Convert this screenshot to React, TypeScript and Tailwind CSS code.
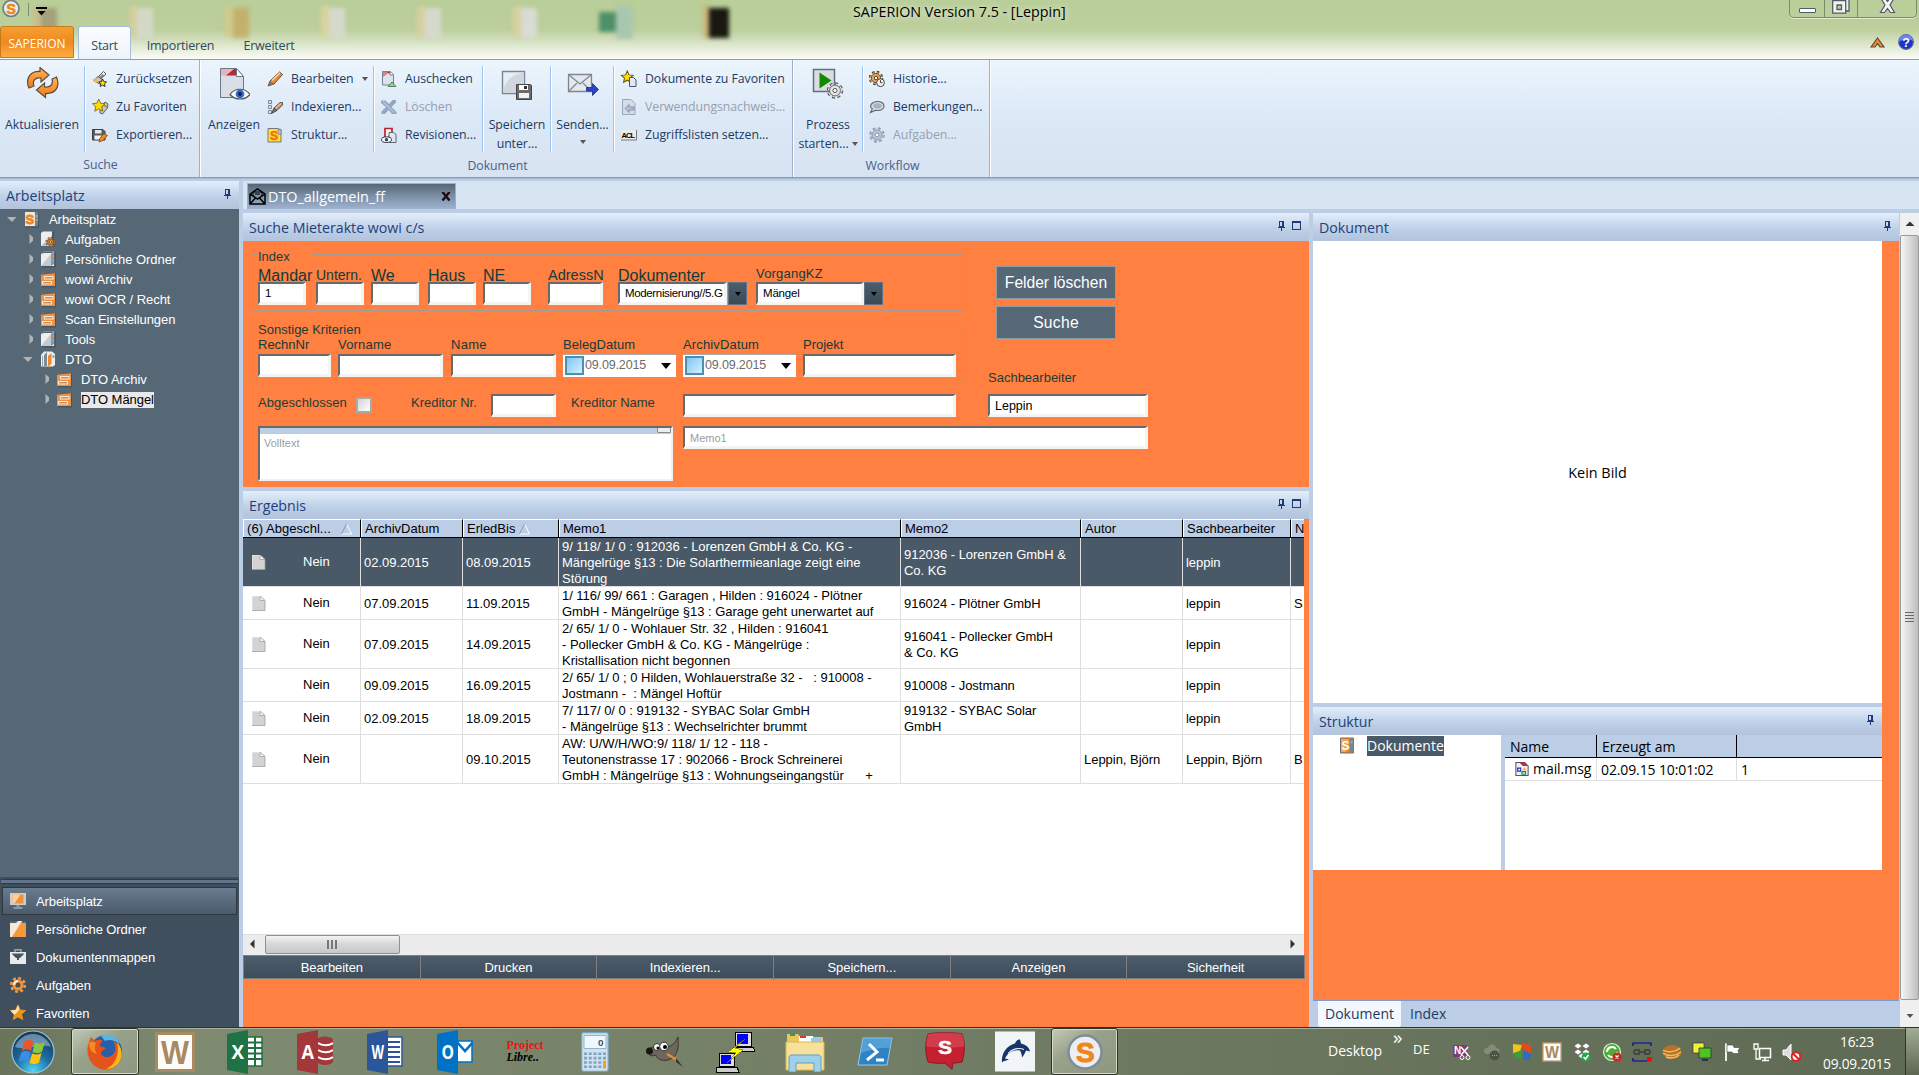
import React from "react";

type Kids = { children?: React.ReactNode };

/* ---------- shared glyphs ---------- */

const Pin = () => (
  <svg width="9" height="10" viewBox="0 0 9 10" className="shrink-0" fill="none" stroke="#1f3a7a" shapeRendering="crispEdges">
    <path d="M2.5 0.5h3v5h-3z M6.5 0v6 M1 6.5h7 M4.5 7v3" />
  </svg>
);
const MaxBox = () => (
  <svg width="10" height="10" viewBox="0 0 10 10" className="shrink-0" fill="none" stroke="#1f3a7a" shapeRendering="crispEdges">
    <path d="M0.5 1.5h8v7h-8z M0 0.5h9" />
  </svg>
);
const Down = ({ c = "#555" }: { c?: string }) => (
  <svg width="6" height="4" viewBox="0 0 6 4" className="shrink-0">
    <path d="M0 0h6L3 4z" fill={c} />
  </svg>
);

function S16({ children, size = 16 }: Kids & { size?: number }) {
  return (
    <svg width={size} height={size} viewBox="0 0 16 16" className="shrink-0 overflow-visible">
      {children}
    </svg>
  );
}

const star = "M8 0l2.200 5 5.300.6-4 3.600 1.200 5.300L8 11.800l-4.700 2.700 1.200-5.300-4-3.600L5.800 5z";

const Gear = ({ fill, stroke, cx = 8, cy = 8, r = 5 }: { fill: string; stroke: string; cx?: number; cy?: number; r?: number }) => (
  <g>
    <circle cx={cx} cy={cy} r={r + 1.2} fill="none" stroke={stroke} strokeWidth={r * 0.6} strokeDasharray={`${(r + 1.2) * 0.42} ${(r + 1.2) * 0.3654}`} />
    <circle cx={cx} cy={cy} r={r + 0.7} fill="none" stroke={fill} strokeWidth={r * 0.35} strokeDasharray={`${(r + 0.7) * 0.34} ${(r + 0.7) * 0.4454}`} />
    <circle cx={cx} cy={cy} r={r} fill={fill} stroke={stroke} strokeWidth=".8" />
    <circle cx={cx} cy={cy} r={r * 0.38} fill="#fff" stroke={stroke} strokeWidth="1" />
  </g>
);

/* ---------- ribbon icons ---------- */

const IcReset = () => (
  <S16>
    <path d="M11.500.500l2.500 2.500-4.500 4.500-3-2z" fill="#f4f4f4" stroke="#555" />
    <path d="M10.500 3l2 1.500-3 3-2.500-1.500z" fill="#8b8b8b" />
    <path d="M6 5.500l4 3-2.500 4.500-6-3.500z" fill="#c9c9c9" stroke="#555" strokeWidth=".9" />
    <path d="M0 8.500l6-1.500-1.500 5z" fill="#ffb84a" />
    <g transform="translate(6.500 8) scale(.52)"><path d={star} fill="#ffe100" stroke="#333" strokeWidth="1.900" /></g>
  </S16>
);
const IcFav = () => (
  <S16>
    <path d="M8 11l5-8 3 2-.5 4-5 6-2.500-1z" fill="#c4c4c4" stroke="#555" strokeWidth=".9" />
    <path d="M11.500 6l3.500 2" stroke="#666" />
    <g transform="scale(.84)"><path d={star} fill="#ffdd00" stroke="#8a6a10" strokeWidth="1.100" /></g>
  </S16>
);
const IcExport = () => (
  <S16>
    <path d="M.5 2.500h10.500l2 2v8.500H.5z" fill="#555b63" stroke="#3a3f46" />
    <path d="M3 3h6.500v3.500H3z" fill="#e6e6e6" />
    <path d="M2.500 8.500h8v4h-8z" fill="#f7f7f7" />
    <path d="M7 15l1-4 4-4.500 3.500 2-4.500 5z" fill="#f08a24" stroke="#6b3a0a" strokeWidth=".7" />
  </S16>
);
const IcPencil = () => (
  <S16>
    <path d="M1 15l2-5L12.500 1l3 2.500-8.500 9.500z" fill="#ee8a2c" stroke="#5a4030" strokeWidth=".9" />
    <path d="M1 15l2-5 4 3z" fill="#777" />
    <path d="M5 9.500l8-7.800" stroke="#ffd9a8" strokeWidth="1.300" />
  </S16>
);
const IcIndex = () => (
  <S16>
    <path d="M1.500 1.500h3v3h-3z M1.500 6.500h3v3h-3z M1.500 11.500h3v3h-3z" fill="#dfe6ef" stroke="#7a8796" />
    <path d="M4.500 14.500l2.500-5.500 3 2.500z" fill="#777" stroke="#333" strokeWidth=".8" />
    <path d="M7 9l6-5.500h2.500v2.500L10 11.500z" fill="#b98a60" stroke="#444" strokeWidth=".8" />
    <path d="M8.500 9.500l5.500-5" stroke="#f3c9a0" strokeWidth="1.100" />
  </S16>
);
const IcStruct = () => (
  <S16>
    <path d="M1 1.500h9l4 1v12.500H1z" fill="#ffe03d" stroke="#777" />
    <path d="M11 2.500h3v5h-3z" fill="#b7bcc4" stroke="#777" strokeWidth=".6" />
    <text x="3" y="13" fontSize="12" fontWeight="900" fontFamily="Liberation Sans" fill="#f07800" stroke="#f07800" strokeWidth=".6">S</text>
  </S16>
);
const IcCheckout = () => (
  <S16>
    <path d="M1.500.5h8l3 3v10.500h-11z" fill="#dde2ea" stroke="#76828f" />
    <path d="M2 1h7L2 6z" fill="#c9898d" />
    <path d="M5.500 1h4v2z" fill="#b5242c" />
    <path d="M9 .5v3.500h3.500" fill="#fff" stroke="#76828f" />
    <path d="M7 15.500l4-4.500 4 4.500z" fill="#8fd49a" stroke="#3d6f4a" strokeWidth=".8" />
  </S16>
);
const IcDelete = () => (
  <S16>
    <path d="M0 1.500h4.500L8 5l3.500-4H15v2.500L10.500 8l5 5v2H11l-3.500-4L4 15H.5v-2.500L5 8 0 4z" fill="#93a5c0" />
    <path d="M2 2.500l11 11" stroke="#b9c6d9" strokeWidth="1.200" />
  </S16>
);
const IcRev = () => (
  <S16>
    <path d="M4 10V1.500h7v4" fill="#f4f5f7" stroke="#b9232c" strokeWidth="1.700" />
    <path d="M8 5.500h4.500l2.500 2v8H8z" fill="#dfe5ed" stroke="#5c6775" />
    <ellipse cx="5.500" cy="12.700" rx="5" ry="2.800" fill="#fff" stroke="#333" />
    <circle cx="5.500" cy="12.700" r="1.800" fill="#334a8a" />
  </S16>
);
const IcDocFav = () => (
  <S16>
    <g transform="scale(.78)"><path d={star} fill="#ffdd00" stroke="#6a5510" strokeWidth="1.300" /></g>
    <path d="M8.500 6.500h4l2.500 2.500v6.500H8.500z" fill="#dfe9f8" stroke="#44546c" />
  </S16>
);
const IcUsage = () => (
  <S16>
    <path d="M1.500.5h8.500l4 4v11h-12.500z" fill="#d4dce8" stroke="#9aa7ba" />
    <path d="M4 9.500l4-4v2.500h5v3H8v2.500z" fill="#b5c2d6" stroke="#7a8ba6" strokeWidth=".9" />
  </S16>
);
const IcAcl = () => (
  <S16>
    <path d="M0 3h15.500v10H0z" fill="#ececec" />
    <path d="M0 13h15.500V3" stroke="#777" fill="none" />
    <text x=".5" y="10.800" fontSize="7.500" fontWeight="900" fontFamily="Liberation Sans" fill="#000" textLength="13.500">ACL</text>
  </S16>
);
const IcHist = () => (
  <S16>
    <Gear fill="#f0a050" stroke="#444" cx={7} cy={7} r={4.6} />
    <circle cx="11.500" cy="11.700" r="3.900" fill="#f4f4f4" stroke="#444" />
    <path d="M11.500 9.200v2.500h2" fill="none" stroke="#444" />
  </S16>
);
const IcComment = () => (
  <S16>
    <path d="M8.500 2.500c4 0 6.500 2 6.500 4.500s-2.500 4.500-6.500 4.500l-2-.2L1.500 13.500l1.800-3.500C-.5 7 3 2.500 8.500 2.500z" fill="#d3d8df" stroke="#5b6573" strokeWidth="1.100" />
    <ellipse cx="8.500" cy="6.800" rx="4.200" ry="2.600" fill="#a9b2be" />
  </S16>
);
const IcTask = () => <S16><Gear fill="#b9c4d4" stroke="#8595ad" r={5} /></S16>;

const BigRefresh = () => (
  <svg width="32" height="32" viewBox="0 0 32 32" className="ml-[2px]">
    <defs>
      <linearGradient id="rf" x1="0" y1="0" x2="0" y2="1"><stop offset="0" stopColor="#ffb35c" /><stop offset="1" stopColor="#f07c12" /></linearGradient>
    </defs>
    <path d="M2 21C-2 12 3 4 13 4.500V.5l9 7.500-8 7v-4C8 10 5 14 7 19z" fill="url(#rf)" stroke="#5e4b3b" strokeWidth="1.200" />
    <path d="M29.500 10c4 10-1 17-11 16.500v4L9.500 23l8-7v4c6 1 9-3 7.500-8z" fill="url(#rf)" stroke="#5e4b3b" strokeWidth="1.200" />
  </svg>
);
const BigView = () => (
  <svg width="32" height="34" viewBox="0 0 32 34">
    <path d="M2.500 1.500h16l7 8v21h-23z" fill="#d8dde6" stroke="#6d7785" />
    <path d="M3 2h15.500l-7 6.500H3z" fill="#e5b5b9" />
    <path d="M8 8.500l8-6.500h2.500v6.500z" fill="#b52a32" />
    <path d="M18.500 1.500l7 8h-7z" fill="#fff" stroke="#6d7785" />
    <path d="M12 27.500c5-7 15-7 20 0-5 6-15 6-20 0z" fill="#fff" stroke="#555" strokeWidth="1.200" />
    <circle cx="22" cy="27" r="4.400" fill="#3568c8" />
    <circle cx="22" cy="27" r="1.900" fill="#0b1f55" />
  </svg>
);
const BigSave = () => (
  <svg width="32" height="34" viewBox="0 -2 32 34">
    <path d="M1.500 2.500h22v22h-22z" fill="#e9edf2" stroke="#76879a" strokeWidth="1.400" />
    <path d="M2.500 20C6 9 14 5 22.500 4v19.500h-20z" fill="#d2d7de" />
    <path d="M15.500 15.500h14l1 1v14h-15z" fill="#6b6b6b" stroke="#444" />
    <path d="M18 16h9v5h-9z" fill="#fff" /><path d="M23 17h3v3h-3z" fill="#333" />
    <path d="M18 24h10v5H18z" fill="#f1f1f1" />
  </svg>
);
const BigSend = () => (
  <svg width="32" height="32" viewBox="0 0 32 32">
    <path d="M1.500 7.500h23v17h-23z" fill="#e5e8ec" stroke="#7b8794" strokeWidth="1.300" />
    <path d="M2 8l11 9L24 8 M2 24l8-8 M24 24l-8-8" fill="none" stroke="#7b8794" strokeWidth="1.200" />
    <path d="M19.500 20.500h6v-4l6 6-6 6v-4.500h-6z" fill="#2a45d0" stroke="#1a2a80" strokeWidth=".8" />
  </svg>
);
const BigProcess = () => (
  <svg width="32" height="32" viewBox="0 0 32 32">
    <path d="M1.500 2.500h21v22h-21z" fill="#d9dde2" stroke="#5d7085" strokeWidth="1.500" />
    <path d="M7.500 5.500l12 8-12 8z" fill="#128a00" />
    <Gear fill="#e4e4e4" stroke="#555" cx={23} cy={23.5} r={5.4} />
  </svg>
);

/* ---------- ribbon ---------- */

const Sep = () => <div className="mt-[6px] h-[86px] w-[2px] shrink-0 border-r border-white bg-[#9cc4f5]" />;
const GroupSep = () => <div className="h-[117px] w-[2px] shrink-0 border-r border-white bg-[#9fb0c8]" />;

function Item({ icon, label, off, arrow }: { icon: React.ReactNode; label: string; off?: boolean; arrow?: boolean }) {
  return (
    <div className={"flex h-7 items-center gap-2 whitespace-nowrap " + (off ? "text-[#97a0ad]" : "text-[#1e3a63]")}>
      {icon}
      <span>{label}</span>
      {arrow && <Down />}
    </div>
  );
}
function Big({ icon, lines, w, arrow }: { icon: React.ReactNode; lines: string[]; w: string; arrow?: "inline" | "below" }) {
  return (
    <div className={"flex shrink-0 flex-col items-center pt-[7px] text-center leading-[19px] whitespace-nowrap text-[#1e3a63] " + w}>
      <div className="h-[48px]">{icon}</div>
      {lines.map((l, i) => (
        <div key={l} className="flex items-center gap-[3px]">
          {l}
          {arrow === "inline" && i === lines.length - 1 && <Down />}
        </div>
      ))}
      {arrow === "below" && <div className="mt-[6px]"><Down /></div>}
    </div>
  );
}
function Group({ label, w, children }: Kids & { label: string; w: string }) {
  return (
    <div className={"flex shrink-0 flex-col " + w}>
      <div className="flex h-[93px]">{children}</div>
      <div className="pl-[2px] text-center leading-[26px] text-[#48618a]">{label}</div>
    </div>
  );
}

function Ribbon() {
  return (
    <div className="flex h-[121px] shrink-0 flex-col border-t border-[#8b9db8] bg-[#bccde6]">
      <div className="flex h-[118px] shrink-0 border-b border-[#8b9db8] bg-linear-to-b from-[#ecf5fd] via-[#dbe8f6] via-50% to-[#d8e3f2] text-[12.3px] tracking-[-0.05px]">
        <Group label="Suche" w="w-[199px]">
          <Big icon={<BigRefresh />} lines={["Aktualisieren"]} w="w-[84px]" />
          <Sep />
          <div className="pt-[5px] pl-[6px]">
            <Item icon={<IcReset />} label="Zurücksetzen" />
            <Item icon={<IcFav />} label="Zu Favoriten" />
            <Item icon={<IcExport />} label="Exportieren..." />
          </div>
        </Group>
        <GroupSep />
        <Group label="Dokument" w="w-[591px]">
          <Big icon={<BigView />} lines={["Anzeigen"]} w="w-[66px]" />
          <div className="w-[106px] pt-[5px] whitespace-nowrap">
            <Item icon={<IcPencil />} label="Bearbeiten" arrow />
            <Item icon={<IcIndex />} label="Indexieren..." />
            <Item icon={<IcStruct />} label="Struktur..." />
          </div>
          <Sep />
          <div className="w-[107px] pt-[5px] pl-[6px]">
            <Item icon={<IcCheckout />} label="Auschecken" />
            <Item icon={<IcDelete />} label="Löschen" off />
            <Item icon={<IcRev />} label="Revisionen..." />
          </div>
          <Sep />
          <Big icon={<BigSave />} lines={["Speichern", "unter..."]} w="w-[66px]" />
          <Sep />
          <Big icon={<BigSend />} lines={["Senden..."]} w="w-[61px]" arrow="below" />
          <Sep />
          <div className="pt-[5px] pl-[6px]">
            <Item icon={<IcDocFav />} label="Dokumente zu Favoriten" />
            <Item icon={<IcUsage />} label="Verwendungsnachweis..." off />
            <Item icon={<IcAcl />} label="Zugriffslisten setzen..." />
          </div>
        </Group>
        <GroupSep />
        <Group label="Workflow" w="w-[195px]">
          <Big icon={<BigProcess />} lines={["Prozess", "starten..."]} w="w-[68px]" arrow="inline" />
          <Sep />
          <div className="pt-[5px] pl-[5px] tracking-[-0.080px]">
            <Item icon={<IcHist />} label="Historie..." />
            <Item icon={<IcComment />} label="Bemerkungen..." />
            <Item icon={<IcTask />} label="Aufgaben..." off />
          </div>
        </Group>
        <GroupSep />
      </div>
      <div className="h-px bg-[#a5b8d3]" />
    </div>
  );
}

/* ---------- title bar ---------- */

const ghosts = [
  { back: "bg-[#c9b98a]", front: "bg-[#a39a78]" },
  { back: "bg-[#d9cf9b]", front: "bg-[#d6d9cc]" },
  { back: "bg-[#d6c98a]", front: "bg-[#c4ad66]" },
  { back: "bg-[#e0d39f]", front: "bg-[#d8dad2]" },
  { back: "bg-[#e0cfa0]", front: "bg-[#d8dad2]" },
  { back: "bg-[#e0cfa0]", front: "bg-[#dcddda]" },
];

function TitleBar() {
  return (
    <div className="relative flex h-[59px] shrink-0 flex-col bg-linear-to-b from-[#b9ce98] via-[#bccf9c] via-50% to-[#fbfcf8]">
      <div className="absolute top-[5px] left-[33px] flex gap-[72px] blur-[2px]">
        {ghosts.map((g, i) => (
          <div key={i} className="flex h-[33px] w-[24px]">
            <div className={"my-px w-[8px] opacity-80 " + g.back} />
            <div className={"mt-[3px] grow opacity-90 " + g.front} />
          </div>
        ))}
        <div className="-ml-[10px] flex h-[34px] w-[34px] items-center">
          <div className="h-[20px] w-[17px] bg-[#4d9068]" />
          <div className="h-[33px] w-[17px] bg-[#a9c7b0]" />
        </div>
        <div className="ml-[-2px] flex h-[33px] w-[26px]">
          <div className="w-[6px] bg-[#cbb578]" />
          <div className="mt-[3px] grow bg-[#181810]" />
        </div>
      </div>
      <div className="relative flex h-[27px]">
        <svg width="20" height="18" viewBox="0 0 20 18" className="ml-[1px]">
          <circle cx="10" cy="8.500" r="8" fill="#e9e9e6" stroke="#6f7d84" strokeWidth="1.700" />
          <text x="5.500" y="13.500" fontSize="14" fontWeight="900" fontFamily="Liberation Sans" fill="#f08418" stroke="#f08418" strokeWidth=".6">S</text>
        </svg>
        <div className="mt-[3px] ml-[7px] h-[13px] w-px bg-[#7c8a6e]" />
        <svg width="11" height="10" viewBox="0 0 11 10" className="mt-[6px] ml-[7px]"><path d="M0 1h11v2H0z M1.500 5h8L5.500 9.500z" /></svg>
        <div className="ml-[806px] w-[218px] pt-[1px] text-[14.300px] leading-[22px] whitespace-nowrap text-black [text-shadow:0_0_6px_white]">
          SAPERION Version 7.5 - [Leppin]
        </div>
        <div className="ml-[718px] flex h-[18px] w-[128px] rounded-b-[5px] border border-t-0 border-[#7d8a6c] shadow-[0_1px_0_#e4edd4]">
          <div className="flex w-[35px] items-center justify-center border-r border-[#7d8a6c] pt-[3px]">
            <div className="h-[5px] w-[17px] rounded-[1px] border border-[#555a66] bg-white" />
          </div>
          <div className="flex w-[33px] justify-center border-r border-[#7d8a6c]">
            <svg width="18" height="15" viewBox="0 0 18 15"><path d="M4 0v-2h13v13h-3" fill="#eee" stroke="#555a66" strokeWidth="1.300" /><path d="M.7.7h13v12.500H.7z M5 5v4.500h4.500V5z" fill="#f3f3f3" fillRule="evenodd" stroke="#555a66" strokeWidth="1.300" /></svg>
          </div>
          <div className="flex grow justify-center">
            <svg width="17" height="14" viewBox="0 0 17 14"><path d="M1.500-2.500h4l3 4 3-4h4L11 5l4.500 7.500h-4l-3-4-3 4h-4L6 5z" fill="#f3f3f3" stroke="#555a66" strokeWidth="1.200" /></svg>
          </div>
        </div>
      </div>
      <div className="relative flex h-[33px] text-[12.500px] text-[#2e4a5c]">
        <div className="h-[32px] w-[74px] rounded-t-[3px] border border-[#c87a1a] bg-linear-to-b from-[#f3a032] via-[#f0891f] via-50% to-[#ffab3d] text-center text-[12px] leading-[33px] text-white">SAPERION</div>
        <div className="ml-[4px] h-[33px] w-[53px] rounded-t-[3px] border border-b-0 border-[#a9bdd8] bg-linear-to-b from-[#fbfdff] to-[#edf4fc] text-center leading-[37px] tracking-tight">Start</div>
        <div className="ml-[15px] w-[69px] text-center leading-[39px] tracking-[-0.2px]">Importieren</div>
        <div className="ml-[27px] w-[54px] text-center leading-[39px] tracking-[-0.2px]">Erweitert</div>
        <div className="grow" />
        <svg width="15" height="12" viewBox="0 0 15 12" className="mt-[10px]"><path d="M1 11l6.500-9L14 11h-4L7.500 7.500 5 11z" fill="#f08a24" stroke="#5b4d3e" strokeWidth="1.200" /></svg>
        <svg width="16" height="16" viewBox="0 0 16 16" className="mt-[8px] mr-[5px] ml-[13px]">
          <circle cx="8" cy="8" r="7.300" fill="#1c35c8" stroke="#5a6390" strokeWidth="1.200" />
          <path d="M1 8a7 7 0 0 1 14-1C11 5 5 5 1 8z" fill="#6f86e6" />
          <text x="4.300" y="12.500" fontSize="12.500" fontWeight="900" fontFamily="Liberation Sans" fill="#fff">?</text>
        </svg>
      </div>
    </div>
  );
}

/* ---------- panels ---------- */

function PanelHead({ title, max }: { title: string; max?: boolean }) {
  return (
    <div className="flex h-7 shrink-0 items-center bg-linear-to-b from-[#e3eefb] via-[#bccfe6] via-60% to-[#b2c3db] pr-[7px] pl-[6px] text-[14.200px] text-[#1f3f7d]">
      <span className="grow pt-[2px]">{title}</span>
      <div className="flex gap-[6px] pb-[2px]">
        <Pin />
        {max && <MaxBox />}
      </div>
    </div>
  );
}

/* ---------- sidebar ---------- */

const TreeS = () => (
  <S16>
    <path d="M2 16h12V2h1v15H2z" fill="#2c3740" opacity=".35" />
    <path d="M1 1h10v14H1z" fill="#f0e6da" /><path d="M11 2l3-1v13l-3 1.500z" fill="#76818a" />
    <text x="1.500" y="13" fontSize="13" fontWeight="900" fontFamily="Liberation Sans" fill="#f0831e" stroke="#f0831e" strokeWidth=".8">S</text>
    <path d="M11.500 4h2.500v2.500h-2.500z" fill="#59b8e8" /><path d="M11.500 8h2.500v2h-2.500z" fill="#f08a24" />
  </S16>
);
const DocS = () => (
  <S16>
    <path d="M1.500 0h13v15h-13z" fill="#f0861a" stroke="#6a6f75" />
    <path d="M10.500 1h4v14l-4-1z" fill="#7a858e" />
    <path d="M2 1h8l-3 13H2z" fill="#f5a752" />
    <text x="2.500" y="12" fontSize="12" fontWeight="900" fontFamily="Liberation Sans" fill="#fff">S</text>
    <path d="M11.500 3h2v2.500h-2z" fill="#59b8e8" />
  </S16>
);
const TreeBinder = () => (
  <S16>
    <path d="M2 15h13V1h1v15.500H2z" fill="#2c3740" opacity=".35" />
    <path d="M1 3l3-2.500h10v14.500H1z" fill="#eceeef" /><path d="M1 3l3-2.500h10l-2 1.500H4z" fill="#59636c" /><path d="M1 15L11 3v12z" fill="#c3c9cd" /><path d="M11 3l3-2v12l-3 2z" fill="#8a949c" /><path d="M12 4h2v2.500h-2z" fill="#f08a24" /><path d="M12 8h2v2.500h-2z" fill="#59b8e8" />
  </S16>
);
const TreeTask = () => (
  <S16>
    <path d="M1 2l2-1.500h9V15H1z" fill="#eceeef" /><path d="M1 15L12 4v11z" fill="#bcc3c8" /><path d="M12 .5h2V14h-2z" fill="#4b5660" /><Gear fill="#e88a34" stroke="#6b4a2a" cx={10.5} cy={11} r={3} />
  </S16>
);
const TreeArchive = () => (
  <S16>
    <path d="M2 15h13V2h1v14.500H2z" fill="#2c3740" opacity=".35" />
    <path d="M1 4l3-3h11v14H1z" fill="#ee9141" /><path d="M1 4l3-3h11v1.200l-10 1z" fill="#59636c" />
    <path d="M4.500 5.500h8.500v2.500H4.500z M2.500 10.500h9v2.500h-9z" fill="#c98d5e" stroke="#fbe9d8" strokeWidth="1.100" />
  </S16>
);
const TreeDto = () => (
  <S16>
    <path d="M1 4l3-3.500h8l3 2.500v11l-2 1.500H1z" fill="#eceeef" /><path d="M4 4l3-3v14H4z" fill="#7f8a93" /><path d="M8 5l3.500-3v11l-3.500 2.500z" fill="#ee8a2c" /><path d="M12.500 4h2v3h-2z" fill="#59b8e8" /><path d="M2 5h1v10H2z" fill="#9ba4ab" />
  </S16>
);

const tree: { label: string; pad: string; open?: boolean; icon: () => React.ReactElement; sel?: boolean }[] = [
  { label: "Arbeitsplatz", pad: "pl-[6px]", open: true, icon: TreeS },
  { label: "Aufgaben", pad: "pl-[22px]", icon: TreeTask },
  { label: "Persönliche Ordner", pad: "pl-[22px]", icon: TreeBinder },
  { label: "wowi Archiv", pad: "pl-[22px]", icon: TreeArchive },
  { label: "wowi OCR / Recht", pad: "pl-[22px]", icon: TreeArchive },
  { label: "Scan Einstellungen", pad: "pl-[22px]", icon: TreeArchive },
  { label: "Tools", pad: "pl-[22px]", icon: TreeBinder },
  { label: "DTO", pad: "pl-[22px]", open: true, icon: TreeDto },
  { label: "DTO Archiv", pad: "pl-[38px]", icon: TreeArchive },
  { label: "DTO Mängel", pad: "pl-[38px]", icon: TreeArchive, sel: true },
];

const nav: { label: string; icon: React.ReactElement }[] = [
  { label: "Arbeitsplatz", icon: <S16><path d="M0 0h16v12H0z" fill="#c9ced3" /><path d="M2.500 1.500h11v9h-11z" fill="#f39034" /><path d="M2.500 1.500h8l-6 9h-2z" fill="#fbcfa2" /><path d="M6.500 12h3v2h3v2h-9v-2h3z" fill="#8e979f" /></S16> },
  { label: "Persönliche Ordner", icon: <S16><path d="M0 0h16v16H0z" fill="#f59a3c" /><path d="M0 0h12L2 16H0z" fill="#f6e7d8" /><path d="M0 0h8l-2 2H0z M12 0h4v2h-4z" fill="#59636c" /></S16> },
  { label: "Dokumentenmappen", icon: <S16><path d="M0 3h16v12H0z" fill="#e8ebee" /><path d="M5 3V.8h6V3" fill="none" stroke="#9aa4ad" strokeWidth="1.500" /><path d="M1.500 4.500h13L10 9H6z" fill="#46525e" /><path d="M7 8h2v3H7z" fill="#46525e" /></S16> },
  { label: "Aufgaben", icon: <S16><circle cx="8" cy="8" r="4" fill="none" stroke="#f39034" strokeWidth="3" /><circle cx="8" cy="8" r="6.800" fill="none" stroke="#f39a48" strokeWidth="2.600" strokeDasharray="2.900 2.440" /><path d="M4 8a4 4 0 0 1 4-4" fill="none" stroke="#fbe3cd" strokeWidth="2.500" /></S16> },
  { label: "Favoriten", icon: <S16><path d={star} fill="#f7930f" stroke="#f7930f" /><path d="M8 0l1.200 5-4.900 5-3.800-4.400L5.800 5z" fill="#fff" opacity=".75" /></S16> },
];

function Sidebar() {
  return (
    <div className="flex w-[239px] shrink-0 flex-col font-['Liberation_Sans',sans-serif] text-white">
      <div className="font-['Open_Sans',sans-serif]"><PanelHead title="Arbeitsplatz" /></div>
      <div className="grow bg-[#566876] text-[13px]">
        {tree.map((t) => (
          <div key={t.label} className={"flex h-5 items-center " + t.pad}>
            <svg width="11" height="12" viewBox="0 0 11 12" className="shrink-0">
              {t.open ? <path d="M1 4h9.500L6 9z" fill="#b3b3b3" /> : <path d="M7.500 1v10l5.500-5z" fill="#b3b3b3" />}
            </svg>
            <div className="ml-[7px] h-4"><t.icon /></div>
            <span className={"mt-px ml-[9px] leading-4 tracking-[-0.05px] whitespace-nowrap " + (t.sel ? "bg-[#e9e9e9] text-black" : "")}>{t.label}</span>
          </div>
        ))}
      </div>
      <div className="h-[150px] shrink-0 bg-[#3f4f5e] text-[13px]">
        <div className="mx-px mt-[2px] h-[5px] border-y border-[#2e3a46] bg-[#61748a]" />
        {nav.map((n, i) => (
          <div key={n.label} className={"mx-[2px] flex h-7 items-center gap-[10px] " + (i === 0 ? "mt-[3px] border border-[#2f3841] bg-linear-to-b from-[#697b8e] to-[#4b5b6c] pl-[7px]" : "pl-[8px]")}>
            {n.icon}
            <span className="pt-px tracking-[-0.100px]">{n.label}</span>
          </div>
        ))}
      </div>
    </div>
  );
}

/* ---------- search form ---------- */

function Field({ w, children, cls = "text-[11.500px]" }: Kids & { w: string; cls?: string }) {
  return (
    <div className={"h-[23px] shrink-0 overflow-hidden border-t-2 border-r-[3px] border-b-[3px] border-l-2 border-t-[#696969] border-r-[#f4f4f4] border-b-[#f4f4f4] border-l-[#696969] bg-white pl-[5px] leading-[18px] whitespace-nowrap text-black " + w + " " + cls}>
      {children}
    </div>
  );
}
function Drop() {
  return <div className="flex h-[23px] w-[19px] shrink-0 items-center justify-center border border-[#5f7384] bg-linear-to-b from-[#4c5d6b] to-[#3c4a58]"><Down c="#000" /></div>;
}
function Labeled({ label, cls, children, w }: Kids & { label: string; cls: string; w: string }) {
  return (
    <div className={"shrink-0 " + w}>
      <div className={"flex h-[17px] items-end whitespace-nowrap text-[#123b3b] " + cls}>{label}</div>
      <div className="flex">{children}</div>
    </div>
  );
}
function DateField() {
  return (
    <div className="flex h-[23px] w-[113px] shrink-0 items-center border-t border-b border-t-[#aaa] border-b-white bg-white pr-[5px] pl-[2px] text-[12.500px] text-[#6c6c6c]">
      <div className="h-[19px] w-[19px] border-2 border-[#4f8fae] bg-linear-to-br from-[#7cc6f5] to-[#d5effc]" />
      <span className="ml-[1px] grow tracking-[-0.150px]">09.09.2015</span>
      <svg width="10" height="6" viewBox="0 0 10 6"><path d="M0 0h10L5 6z" /></svg>
    </div>
  );
}
function Box({ legend, lw, mt, children }: Kids & { legend: string; lw: string; mt: string }) {
  return (
    <div className={"h-[57px] rounded-[3px] border border-[#a79c93] pl-[5px] " + mt}>
      <div className={"-mt-[6px] h-[14px] bg-[#ff8040] pl-px text-[13px] leading-[16px] text-[#1d3d3a] " + lw}>{legend}</div>
      {children}
    </div>
  );
}

function SearchForm() {
  return (
    <div className="h-[246px] shrink-0 bg-[#ff8040] pl-[8px] font-['Liberation_Sans',sans-serif]">
      <div className="flex">
        <div className="w-[713px] shrink-0">
          <Box legend="Index" lw="w-[55px]" mt="mt-[13px]">
            <div className="mt-[2px] flex pl-px">
              <Labeled label="Mandar" cls="text-[16px] leading-[13px]" w="w-[58px]"><Field w="w-[48px]">1</Field></Labeled>
              <Labeled label="Untern." cls="text-[14px] leading-[14px]" w="w-[55px]"><Field w="w-[48px]" /></Labeled>
              <Labeled label="We" cls="text-[16px] leading-[13px]" w="w-[57px]"><Field w="w-[48px]" /></Labeled>
              <Labeled label="Haus" cls="text-[16px] leading-[13px]" w="w-[55px]"><Field w="w-[48px]" /></Labeled>
              <Labeled label="NE" cls="text-[16px] leading-[13px]" w="w-[65px]"><Field w="w-[48px]" /></Labeled>
              <Labeled label="AdressN" cls="text-[14.500px] leading-[14px]" w="w-[70px]"><Field w="w-[55px]" /></Labeled>
              <Labeled label="Dokumenter" cls="text-[16px] leading-[13px]" w="w-[138px]">
                <Field w="w-[109px]" cls="text-[11.500px] tracking-[-0.350px]">Modernisierung//5.G</Field>
                <div className="w-px" />
                <Drop />
              </Labeled>
              <Labeled label="VorgangKZ" cls="text-[13px] leading-[16px] tracking-[0.200px]" w="w-[128px]"><Field w="w-[108px]" cls="text-[11.500px] tracking-[-0.200px]">Mängel</Field><Drop /></Labeled>
            </div>
          </Box>
          <Box legend="Sonstige Kriterien" lw="w-[106px]" mt="mt-[16px]">
            <div className="mt-[1px] flex pl-px">
              <Labeled label="RechnNr" cls="text-[13px] leading-[18px]" w="w-[80px]"><Field w="w-[73px]" /></Labeled>
              <Labeled label="Vorname" cls="text-[13px] leading-[18px] tracking-[0.200px]" w="w-[113px]"><Field w="w-[105px]" /></Labeled>
              <Labeled label="Name" cls="text-[13px] leading-[18px] tracking-[0.300px]" w="w-[112px]"><Field w="w-[105px]" /></Labeled>
              <Labeled label="BelegDatum" cls="text-[13px] leading-[18px] tracking-[0.050px]" w="w-[120px]"><DateField /></Labeled>
              <Labeled label="ArchivDatum" cls="text-[13px] leading-[18px] tracking-[0.150px]" w="w-[120px]"><DateField /></Labeled>
              <Labeled label="Projekt" cls="text-[13px] leading-[18px]" w="w-[153px]"><Field w="w-[153px]" /></Labeled>
            </div>
          </Box>
          <div className="mt-[10px] flex pl-[7px] text-[13px] text-[#1d3d3a]">
            <span className="w-[98px] leading-[18px] tracking-[0.050px]">Abgeschlossen</span>
            <div className="mt-[3px] h-4 w-4 border-2 border-[#a9a9a9] bg-linear-to-br from-[#d3d3d3] to-white" />
            <span className="ml-[39px] w-[80px] leading-[18px]">Kreditor Nr.</span>
            <Field w="w-[65px]" />
            <span className="ml-[15px] w-[112px] leading-[18px]">Kreditor Name</span>
            <Field w="w-[273px]" />
          </div>
        </div>
        <div className="ml-[24px] w-[160px] pt-[25px]">
          <div className="ml-[8px] h-[33px] w-[120px] border border-[#8f9ba5] bg-[#566876] text-center text-[15.600px] leading-[31px] text-white">Felder löschen</div>
          <div className="mt-[7px] ml-[8px] h-[33px] w-[120px] border border-[#8f9ba5] bg-[#566876] text-center text-[15.600px] leading-[31px] tracking-[0.300px] text-white">Suche</div>
          <div className="mt-[30px] mb-[7px] text-[13px] leading-[18px] text-[#1d3d3a]">Sachbearbeiter</div>
          <Field w="w-[160px]" cls="text-[12.500px] pt-px">Leppin</Field>
        </div>
      </div>
      <div className="mt-[9px] flex pl-[7px] text-[11px] text-[#9d9d9d]">
        <div className="h-[55px] w-[415px] border-2 border-t-[#696969] border-r-[#f1f1f1] border-b-[#f1f1f1] border-l-[#696969] bg-white">
          <div className="flex h-[6px] justify-end bg-[#bccde6]"><div className="h-[5px] w-[14px] rounded-b-[2px] border border-t-0 border-[#888] bg-[#eee]" /></div>
          <div className="pl-[4px] leading-[18px]">Volltext</div>
        </div>
        <div className="ml-[10px] h-[23px] w-[465px] border-t-2 border-r-[3px] border-b-[3px] border-l-2 border-t-[#696969] border-r-[#f4f4f4] border-b-[#f4f4f4] border-l-[#696969] bg-white pl-[5px] leading-[20px]">Memo1</div>
      </div>
    </div>
  );
}

/* ---------- result table ---------- */

const cols = ["w-[118px]", "w-[102px]", "w-[96px]", "w-[342px]", "w-[180px]", "w-[102px]", "w-[108px]", "w-[13px]"];
const heads = ["(6) Abgeschl...", "ArchivDatum", "ErledBis", "Memo1", "Memo2", "Autor", "Sachbearbeiter", "N"];
const rows: { tall?: boolean; doc?: boolean; sel?: boolean; c: (string[] | string)[] }[] = [
  { tall: true, doc: true, sel: true, c: ["02.09.2015", "08.09.2015", ["9/ 118/ 1/ 0 : 912036 - Lorenzen GmbH & Co. KG -", "Mängelrüge §13 : Die Solarthermieanlage zeigt eine", "Störung"], ["912036 - Lorenzen GmbH &", "Co. KG"], "", "leppin", ""] },
  { doc: true, c: ["07.09.2015", "11.09.2015", ["1/ 116/ 99/ 661 : Garagen , Hilden : 916024 - Plötner", "GmbH - Mängelrüge §13 : Garage geht unerwartet auf"], "916024 - Plötner GmbH", "", "leppin", "S"] },
  { tall: true, doc: true, c: ["07.09.2015", "14.09.2015", ["2/ 65/ 1/ 0 - Wohlauer Str. 32 , Hilden : 916041", "- Pollecker GmbH & Co. KG - Mängelrüge :", "Kristallisation nicht begonnen"], ["916041 - Pollecker GmbH", "& Co. KG"], "", "leppin", ""] },
  { c: ["09.09.2015", "16.09.2015", ["2/ 65/ 1/ 0 ; 0 Hilden, Wohlauerstraße 32 -   : 910008 -", "Jostmann -  : Mängel Hoftür"], "910008 - Jostmann", "", "leppin", ""] },
  { doc: true, c: ["02.09.2015", "18.09.2015", ["7/ 117/ 0/ 0 : 919132 - SYBAC Solar GmbH", "- Mängelrüge §13 : Wechselrichter brummt"], ["919132 - SYBAC Solar", "GmbH"], "", "leppin", ""] },
  { tall: true, doc: true, c: ["", "09.10.2015", ["AW: U/W/H/WO:9/ 118/ 1/ 12 - 118 -", "Teutonenstrasse 17 : 902066 - Brock Schreinerei", "GmbH : Mängelrüge §13 : Wohnungseingangstür      +"], "", "Leppin, Björn", "Leppin, Björn", "B"] },
];

const DocGlyph = () => (
  <svg width="14" height="15" viewBox="0 0 14 15" className="shrink-0">
    <path d="M0 0h8.500l4.500 4v10.500H0z" fill="#d3d3d3" />
    <path d="M8 0l5 4.500H8z" fill="#f8f8f8" stroke="#999" strokeWidth=".7" />
    <path d="M.4 14.500V.4H8" fill="none" stroke="#e6e6e6" strokeWidth=".8" />
    <path d="M0 14.500h13V4.500" fill="none" stroke="#9f9f9f" strokeWidth=".8" />
  </svg>
);
const Sort = () => (
  <svg width="11" height="12" viewBox="0 0 11 12" className="shrink-0" fill="none"><path d="M5.500 1L10.500 11H.5" stroke="#fff" /><path d="M5.500 1L.5 11" stroke="#8a97aa" /></svg>
);

function Results() {
  return (
    <div className="flex grow flex-col bg-[#ff8040] font-['Liberation_Sans',sans-serif] text-[13px]">
      <div className="flex h-[415px] w-[1061px] shrink-0 flex-col overflow-hidden bg-white">
        <div className="flex h-[19px] shrink-0 border-b border-black bg-[#bccde6] text-black">
          {heads.map((h, i) => (
            <div key={h} className={"flex shrink-0 items-center overflow-hidden border-t border-l border-t-white border-l-white pl-[3px] leading-[18px] whitespace-nowrap " + (i < 7 ? "border-r border-r-black " : "") + cols[i]}>
              <span className={i === 0 ? "w-[94px] tracking-[0.05px]" : i === 2 ? "mr-[4px]" : ""}>{h}</span>
              {(i === 0 || i === 2) && <Sort />}
            </div>
          ))}
        </div>
        {rows.map((r, ri) => (
          <div key={ri} className={"flex shrink-0 border-b border-[#dedede] " + (r.tall ? "h-[49px] " : "h-[33px] ") + (r.sel ? "bg-[#4a5968] text-white" : "text-black")}>
            <div className={"flex shrink-0 items-center border-r border-[#dedede] pl-[9px] " + cols[0]}>
              <div className="w-[51px]">{r.doc && <DocGlyph />}</div>
              Nein
            </div>
            {r.c.map((v, i) => (
              <div key={i} className={"flex shrink-0 flex-col justify-center overflow-hidden pl-[3px] leading-[17px] tracking-[-0.03px] whitespace-pre " + (i < 6 ? "border-r border-[#dedede] " : "") + cols[i + 1]}>
                {(Array.isArray(v) ? v : [v]).map((l, k) => <div key={k} className="h-4">{l}</div>)}
              </div>
            ))}
          </div>
        ))}
      </div>
      <div className="flex h-[21px] w-[1061px] shrink-0 items-center border-t border-[#ddd] bg-[#ececec] pb-[2px]">
        <svg width="22" height="10" viewBox="0 0 22 10"><path d="M11.500.5v9L7 5z" fill="#333" /></svg>
        <div className="flex h-[19px] w-[135px] items-center justify-center gap-[2px] rounded-[2px] border border-[#8f8f8f] bg-linear-to-b from-[#f3f3f3] via-[#d6d6d9] via-50% to-[#c9c9cc] pr-[2px]">
          <div className="h-[9px] w-[2px] bg-[#777]" /><div className="h-[9px] w-[2px] bg-[#777]" /><div className="h-[9px] w-[2px] bg-[#777]" />
        </div>
        <div className="grow" />
        <svg width="17" height="10" viewBox="0 0 17 10"><path d="M3.500.5v9L8 5z" fill="#333" /></svg>
      </div>
      <div className="grid h-[24px] w-[1062px] shrink-0 grid-cols-6 border border-[#7f7f7f] bg-linear-to-b from-[#4b5c6c] to-[#3f4d5a] text-center leading-[24px] text-white">
        {["Bearbeiten", "Drucken", "Indexieren...", "Speichern...", "Anzeigen", "Sicherheit"].map((b) => (
          <div key={b} className="border-r border-[#7f7f7f] tracking-[-0.050px] last:border-r-0">{b}</div>
        ))}
      </div>
    </div>
  );
}

/* ---------- document side ---------- */

function DocSide() {
  return (
    <div className="flex w-[606px] shrink-0">
      <div className="flex w-[586px] flex-col bg-[#ff8040]">
        <PanelHead title="Dokument" />
        <div className="flex h-[462px] w-[569px] shrink-0 items-center justify-center bg-white pt-[2px] text-[14.400px] text-black">Kein Bild</div>
        <div className="h-1 w-[569px] shrink-0 bg-[#bccde6]" />
        <div className="w-[569px]"><PanelHead title="Struktur" /></div>
        <div className="flex h-[135px] w-[569px] shrink-0 bg-white text-[14px] text-black">
          <div className="flex w-[188px] items-start pl-[26px]">
            <div className="pt-[3px]"><DocS /></div>
            <span className="mt-[1px] ml-[12px] bg-[#4a5968] leading-[20px] text-white">Dokumente</span>
          </div>
          <div className="w-1 bg-[#bccde6]" />
          <div className="grow">
            <div className="flex h-[23px] border-b border-black bg-[#bccde6] leading-[23px]">
              <div className="w-[92px] border-r border-black pl-[5px]">Name</div>
              <div className="w-[140px] border-r border-black pl-[5px]">Erzeugt am</div>
            </div>
            <div className="flex h-[23px] border-b border-[#dedede] leading-[24px]">
              <div className="flex w-[92px] items-center gap-[4px] border-r border-[#dedede] pl-[10px]">
                <S16 size={14}><path d="M1 .5h10l4 4v11H1z" fill="#eef0f5" stroke="#556" strokeWidth="1.200" /><path d="M5 .5h6l4 4H9z" fill="#b5323a" /><path d="M3 7h3.500v3.500H3z" fill="none" stroke="#23c" strokeWidth="1.300" /><path d="M8 11h4v3H8z" fill="none" stroke="#093" strokeWidth="1.300" /><path d="M8.500 9.500l2.200-3.500 2.200 3.500z" fill="#fa3" /></S16>
                <span className="tracking-[-0.050px]">mail.msg</span>
              </div>
              <div className="w-[140px] border-r border-[#dedede] pl-1 tracking-[-0.120px]">02.09.15 10:01:02</div>
              <div className="pl-1">1</div>
            </div>
          </div>
        </div>
        <div className="grow" />
        <div className="flex h-[27px] shrink-0 border-t border-[#7b9bd2] bg-[#bccde6] pl-[5px] text-[14px] leading-[25px] text-[#1f3a63]">
          <div className="w-[83px] rounded-b-[3px] bg-[#f3f8fe] text-center">Dokument</div>
          <div className="pl-[9px]">Index</div>
        </div>
      </div>
      <div className="ml-px flex w-[19px] flex-col items-center bg-[#f0f0f0]">
        <svg width="10" height="22" viewBox="0 0 10 22" className="shrink-0"><path d="M.5 13h9L5 8.500z" fill="#333" /></svg>
        <div className="flex w-[19px] grow flex-col items-center justify-center gap-[2px] rounded-[2px] border border-[#9a9a9a] bg-linear-to-r from-[#f5f5f5] via-[#dadadc] via-50% to-[#bebec2] pb-[2px]">
          {[0, 1, 2, 3].map((k) => <div key={k} className="h-px w-[9px] bg-[#666]" />)}
        </div>
        <svg width="10" height="27" viewBox="0 0 10 27" className="shrink-0"><path d="M1.500 14h7L5 18z" fill="#555" /></svg>
      </div>
    </div>
  );
}

/* ---------- taskbar ---------- */

function Office({ a, c, kind }: { a: string; c: string; kind: string }) {
  return (
    <svg width="36" height="44" viewBox="0 0 36 44">
      {kind === "sheet" && <g><path d="M20 7h15v29H20z" fill="#fff" stroke={c} strokeWidth="1.500" /><path d="M20 12.500h15 M20 18h15 M20 23.500h15 M20 29h15 M28 7v29" fill="none" stroke={c} strokeWidth="2" /></g>}
      {kind === "lines" && <g><path d="M20 7h15v29H20z" fill="#fff" stroke={c} strokeWidth="1.500" /><path d="M21 12h12 M21 17h12 M21 22h12 M21 27h12 M21 32h12" fill="none" stroke={c} strokeWidth="2" /></g>}
      {kind === "db" && <g><path d="M20 9c3-3.500 13-3.500 16 0v23c-3 4-13 4-16 0z" fill={c} /><path d="M21 13c4 3 11 3 15 0 M21 20c4 3 11 3 15 0 M21 27c4 3 11 3 15 0" fill="none" stroke="#fff" strokeWidth="2" /></g>}
      {kind === "mail" && <g><path d="M20 11h15v21H20z" fill="#fff" stroke={c} strokeWidth="1.500" /><path d="M20 12l8 9 8-9" fill="none" stroke={c} strokeWidth="2.500" /></g>}
      <path d="M0 4L21 0v44L0 40z" fill={c} />
      <text x="4.500" y="29" fontSize="20" fontWeight="700" fontFamily="Open Sans" fill="#fff" textLength="12.500" lengthAdjust="spacingAndGlyphs">{a}</text>
    </svg>
  );
}

function WIcon({ s }: { s: number }) {
  return (
    <svg width={s} height={s} viewBox="0 0 40 40">
      <path d="M1.500 1.500h37v37h-37z" fill="#fdfcfa" stroke="#a88a5e" strokeWidth="3" />
      <text x="6" y="32" fontSize="33" fontWeight="700" fontFamily="Liberation Sans" fill="#a88a5e" textLength="28" lengthAdjust="spacingAndGlyphs">W</text>
    </svg>
  );
}

const Slot = ({ w, children }: Kids & { w: string }) => <div className={"flex h-full shrink-0 items-center justify-center " + w}>{children}</div>;
const Active = ({ w, children }: Kids & { w: string }) => (
  <div className={"flex h-full shrink-0 items-center justify-center rounded-[3px] border border-[#2d3328] bg-linear-to-br from-[#c3c9b7] via-[#98a18a] via-40% to-[#8d977e] shadow-[inset_0_0_0_1px_#d5dacb] " + w}>{children}</div>
);

const Orb = () => (
  <svg width="44" height="44" viewBox="0 0 44 44">
    <defs><radialGradient id="orb" cx=".5" cy=".95" r=".9"><stop offset="0" stopColor="#4fd6f5" /><stop offset=".5" stopColor="#1c6a9e" /><stop offset="1" stopColor="#16395c" /></radialGradient></defs>
    <circle cx="22" cy="22" r="21" fill="url(#orb)" stroke="#9fc3d4" strokeWidth="1.200" />
    <path d="M4 17a19 19 0 0 1 36 0C30 13 14 21 4 17z" fill="#b8d3e6" opacity=".5" />
    <path d="M13 12c3.500-2.500 6-2.500 9.500-.5l-2.500 9.500c-3-2-6-2-9 .5z" fill="#e8562a" />
    <path d="M24 12.500c3.500 1.500 6 1.500 10-.5l-3 9.500c-3 2-6 2-9.500.5z" fill="#8cc63f" />
    <path d="M10 23c3-2.500 6-2.500 9.500-.5L17 32c-3-2-6-2-9.500.500z" fill="#3a8ee6" />
    <path d="M21 23.500c3.500 1.500 6 1.500 9.500-.5l-2.500 9.500c-3.500 2-6 2-9.500.5z" fill="#fcc30f" />
  </svg>
);
const Firefox = () => (
  <svg width="38" height="38" viewBox="0 0 38 38">
    <circle cx="20" cy="18" r="16" fill="#2a5ea8" />
    <path d="M15 3c7-4 16 0 19 8-6-4-11-5-15-3z" fill="#57b6e4" />
    <path d="M3 9l2-5 4 4c3-2 6-1 8 0-3 2-3 4-3 5l6 2-5 4c0 5 6 6 10 4 6-3 5-10 2-15 8 4 11 13 7 20-4 8-14 11-22 7C3 31-1 19 3 9z" fill="#e5531d" />
    <path d="M31 9c6 7 6 16 1 22-3 3-7 5-12 5 9-4 14-14 11-27z" fill="#fbb51c" />
    <path d="M3 10c3-2 5-1 7 0-2 5-1 8 1 11-4-1-8-4-8-11z" fill="#f58a25" />
  </svg>
);
const Calc = () => (
  <svg width="28" height="40" viewBox="0 0 28 46" preserveAspectRatio="none">
    <rect x=".7" y=".7" width="26.500" height="44.500" rx="2" fill="#cfe2ef" stroke="#7aa3bf" strokeWidth="1.200" />
    <path d="M3 4h22v15H3z" fill="#eef8fd" stroke="#88b0cc" /><text x="17" y="16" fontSize="10" fontWeight="700" fontFamily="Liberation Sans" fill="#456">0</text>
    <path d="M3 25h22 M3 30h22 M3 35h22 M3 40h22" stroke="#7fa5c1" strokeWidth="3" strokeDasharray="3 1.750" /><path d="M22 33h3v9h-3z" fill="#f5a11f" />
  </svg>
);
const Gimp = () => (
  <svg width="38" height="36" viewBox="0 0 38 36">
    <path d="M2 15c6-3 13-2 20-2 4-1 8-5 10-10 1 9 0 18-7 22-7 3-14 1-15-4-5 2-9 0-8-6z" fill="#6f665b" stroke="#3c362f" />
    <circle cx="11" cy="13" r="3.500" fill="#f5f5f5" stroke="#333" /><circle cx="18" cy="12.500" r="4.300" fill="#f5f5f5" stroke="#333" />
    <circle cx="12" cy="14" r="1.500" /><circle cx="19" cy="13" r="2" /><ellipse cx="3.500" cy="17" rx="3.500" ry="3.500" fill="#161616" />
    <path d="M21 20l10 6" stroke="#e78b2e" strokeWidth="2.500" /><path d="M30 24l7 9-7-5z" fill="#333" />
  </svg>
);
const Putty = () => (
  <svg width="40" height="42" viewBox="0 0 40 42" shapeRendering="crispEdges">
    <path d="M20 1h16v14H20z" fill="#ddd" stroke="#000" /><path d="M22 3h11v10H22z" fill="#00f" /><path d="M18 16h20l2 4H18z" fill="#ccc" stroke="#000" />
    <path d="M4 22h15v13H4z" fill="#ddd" stroke="#000" /><path d="M6 24h10v9H6z" fill="#00f" /><path d="M1 36h21l2 5H1z" fill="#ccc" stroke="#000" />
    <path d="M30 8L13 21l8 1-9 10 16-13-8-2z" fill="#ff0" stroke="#770" strokeWidth=".7" />
  </svg>
);
const Explorer = () => (
  <svg width="40" height="40" viewBox="0 0 40 40">
    <path d="M2 2h11l2 3h23v30H2z" fill="#e9c75e" /><path d="M5 1h5v3H5z" fill="#3a9c4a" /><path d="M14 4h14v6H14z" fill="#fff" /><path d="M15 4h6v2h-6z" fill="#d33" /><path d="M26 6h10v4H26z" fill="#9cc9ee" />
    <path d="M1 10h38v28H1z" fill="#f7e19a" stroke="#d9b850" />
    <path d="M4 40V26c0-2 1-3 3-3h26c2 0 3 1 3 3v14h-7v-9H11v9z" fill="#9fd0ea" stroke="#5d9fc4" />
  </svg>
);
const PowerShell = () => (
  <svg width="36" height="30" viewBox="0 0 36 30">
    <path d="M6 1h29l-5 27H1z" fill="#2d83c4" stroke="#9cc9e8" /><path d="M6 1h29l-2 10C22 10 12 14 3 16z" fill="#6db4e2" opacity=".6" />
    <path d="M12 7l8 8-10 8 M19 23h8" fill="none" stroke="#fff" strokeWidth="3" />
  </svg>
);
const SBubble = () => (
  <svg width="40" height="40" viewBox="0 0 40 44" preserveAspectRatio="none">
    <path d="M3 2C14 0 26 0 37 2c3 9 3 21 0 31-4 1-7 1-9 1l-1 7-7-6.500c-6 0-12 0-17-1.500C0 23 0 11 3 2z" fill="#c61f30" stroke="#8e1420" />
    <path d="M3 2C14 0 26 0 37 2c2 4 2 9 2 14-12 2-26 1-38 0 0-5 1-10 2-14z" fill="#e2606c" opacity=".45" />
    <text x="13" y="24" fontSize="21" fontWeight="700" fontFamily="Liberation Sans" fill="#fff" stroke="#fff" strokeWidth=".5">S</text>
  </svg>
);
const Dolphin = () => (
  <svg width="40" height="41" viewBox="0 0 40 40">
    <path d="M0 0h40v40H0z" fill="#f1f5f8" />
    <path d="M7 31c-1-8 4-17 13-19 1-3 3-4 5-4l1 4c4 1 8 3 9 8l-4-1c-1 2-2 5-4 7 0-3-1-5-2-7-7-1-12 2-15 8l4 1-6 2z" fill="#15356b" />
    <path d="M13 22c4-5 11-6 16-4" fill="none" stroke="#f1f5f8" strokeWidth="1.200" />
  </svg>
);
const SapIcon = () => (
  <svg width="36" height="36" viewBox="0 0 36 36">
    <circle cx="18" cy="18" r="16.500" fill="#eceff2" stroke="#7e8c9b" strokeWidth="2.500" />
    <text x="9" y="28" fontSize="28" fontWeight="900" fontFamily="Liberation Sans" fill="#f0861a" stroke="#f0861a">S</text>
  </svg>
);

const T = ({ children }: Kids) => <svg width="20" height="20" viewBox="0 0 20 20" className="shrink-0">{children}</svg>;
const tray: React.ReactElement[] = [
  <T><path d="M1 3h14v12H1z" fill="#80397b" /><text x="2" y="12" fontSize="10" fontWeight="700" fontFamily="Liberation Sans" fill="#fff">N</text><path d="M9 5l7 8 M16 5l-7 8" stroke="#fff" strokeWidth="1.500" /><circle cx="10" cy="15.500" r="2" fill="none" stroke="#fff" /><circle cx="16" cy="15.500" r="2" fill="none" stroke="#fff" /></T>,
  <T><path d="M4 12c-4-2-2-7 2-6 1-5 8-4 8 0 5 0 5 6 0 6H5z" fill="#858c79" /><circle cx="12.500" cy="13.500" r="5" fill="#4d5446" /><path d="M10 13.500h6" stroke="#9aa18e" strokeDasharray="1 1" /></T>,
  <T><path d="M1 2l9 1-2 7-7 1z" fill="#f0c419" /><path d="M9 1l10 2v8l-8-2z" fill="#e14b1e" /><path d="M2 11l8-3-1 9-6-1z" fill="#3c9c3e" /><path d="M12 8l7 4-1 6-7 0z" fill="#2a6fc2" /></T>,
  <WIcon s={20} />,
  <T><path d="M6 1l4 3-4 3-4-3z M14 1l4 3-4 3-4-3z M6 7l4 3-4 3-4-3z M14 7l4 3-4 3-4-3z M10 11l4 3-4 3-4-3z" fill="#fff" stroke="#555" strokeWidth=".6" /><circle cx="14" cy="15" r="4.500" fill="#26a84a" /><path d="M11.500 15l2 2 3-4" stroke="#fff" fill="none" strokeWidth="1.500" /></T>,
  <T><circle cx="10" cy="10" r="8.500" fill="#4fae3a" stroke="#d8f0c8" strokeWidth="1.200" /><path d="M5 10a5 5 0 0 1 9-3 M15 10a5 5 0 0 1-9 3" fill="none" stroke="#fff" strokeWidth="2" /><circle cx="15" cy="15" r="4.500" fill="#c22" /><path d="M13.500 13.500l3 3 M16.500 13.500l-3 3" stroke="#fff" strokeWidth="1.300" /></T>,
  <T><path d="M1 4V1h18v3 M1 16v3h14" fill="none" stroke="#00b" strokeWidth="1.200" /><path d="M8 8H3.500c-2 0-2 4 0 4H8 M12 8h4.500c2 0 2 4 0 4H12 M6 10h8" fill="none" stroke="#3a3a3a" strokeWidth="1.500" /><path d="M15 15h4.500v4.500H15z" fill="#f00" /></T>,
  <T><ellipse cx="10" cy="10" rx="9.500" ry="7" fill="#b9702a" /><path d="M1 8c5 3 13 2 17-2 M1 11c5 4 13 3 18-1 M4 15c4 2 10 1 13-2" stroke="#efc060" fill="none" strokeWidth="1.400" /></T>,
  <T><path d="M1 1h11v10H1z" fill="#f5ef3a" stroke="#333" strokeWidth=".7" /><path d="M7 6h12v10H7z" fill="#4fc31e" stroke="#234" strokeWidth=".8" /><path d="M10 17h6v2h-6z" fill="#234" /></T>,
  <T><path d="M4 1.500v17.500" stroke="#fff" strokeWidth="1.800" /><path d="M5 3h6l1 2.500h6l-2 3 1 3h-6l-1-1.500H5z" fill="#fff" stroke="#444" strokeWidth=".6" /></T>,
  <T><path d="M7.500 6.500h11v9h-11z M10 18.500h7 M13 15v3.500" fill="none" stroke="#fff" strokeWidth="1.500" /><path d="M2 2h4v5H2z M4 7v10h5" fill="none" stroke="#fff" strokeWidth="1.300" /></T>,
  <T><path d="M1 8h3l5-6v16l-5-5H1z" fill="#ddd" stroke="#fff" /><circle cx="14" cy="14.500" r="4.300" fill="#fff" stroke="#e02020" strokeWidth="1.900" /><path d="M11 11.500l6 6" stroke="#e02020" strokeWidth="1.900" /></T>,
];

function Taskbar() {
  return (
    <div className="flex h-[48px] shrink-0 border-t border-[#2f332b] bg-linear-to-r from-[#69745a] via-[#7f8b70] via-10% to-[#5f6a54] shadow-[inset_0_1px_0_#a9b19d]">
      <Slot w="w-[66px]"><Orb /></Slot>
      <div className="w-[5px]" />
      <Active w="w-[68px]"><Firefox /></Active>
      <Slot w="w-[72px]"><WIcon s={40} /></Slot>
      <Slot w="w-[68px]"><Office a="X" c="#1f7244" kind="sheet" /></Slot>
      <Slot w="w-[72px]"><Office a="A" c="#a4373a" kind="db" /></Slot>
      <Slot w="w-[68px]"><Office a="W" c="#2b579a" kind="lines" /></Slot>
      <Slot w="w-[72px]"><Office a="O" c="#0072c6" kind="mail" /></Slot>
      <Slot w="w-[68px]">
        <div className="pb-[2px] font-['Liberation_Serif',serif] text-[12px] leading-[12px] font-bold">
          <div className="text-[#f01010]">Project</div>
          <div className="text-black italic">Libre..</div>
        </div>
      </Slot>
      <Slot w="w-[72px]"><Calc /></Slot>
      <Slot w="w-[68px]"><Gimp /></Slot>
      <Slot w="w-[72px]"><Putty /></Slot>
      <Slot w="w-[68px]"><Explorer /></Slot>
      <Slot w="w-[71px]"><PowerShell /></Slot>
      <Slot w="w-[69px]"><SBubble /></Slot>
      <Slot w="w-[71px]"><Dolphin /></Slot>
      <div className="w-[1px]" />
      <Active w="w-[67px]"><SapIcon /></Active>
      <div className="ml-[210px] w-[65px] pt-px text-[14px] leading-[44px] text-white">Desktop</div>
      <div className="w-[20px] text-[19px] leading-[18px] text-white">»</div>
      <div className="w-[39px] text-[13px] leading-[42px] text-white">DE</div>
      <div className="flex items-center gap-[10px]">
        {tray.map((t, i) => <React.Fragment key={i}>{t}</React.Fragment>)}
      </div>
      <div className="ml-[15px] w-[80px] pt-[3px] text-center text-[13.700px] leading-[22px] tracking-[-0.200px] text-white">
        <div>16:23</div>
        <div>09.09.2015</div>
      </div>
      <div className="ml-auto w-[14px] border-l border-[#2f332b] bg-linear-to-b from-[#a3ac95] to-[#5c6650]" />
    </div>
  );
}

/* ---------- app ---------- */

export default function App() {
  return (
    <div className="flex h-[1075px] w-[1919px] flex-col overflow-hidden bg-[#bccde6] font-['Open_Sans',sans-serif]">
      <TitleBar />
      <Ribbon />
      <div className="mt-px flex h-[846px] shrink-0">
        <Sidebar />
        <div className="w-1 shrink-0 bg-[#bccde6]" />
        <div className="flex min-w-0 grow flex-col">
          <div className="flex h-7 shrink-0 bg-[#d7e5f3] pt-[2px] pl-[4px]">
            <div className="flex w-[209px] items-center border border-b-0 border-[#9db0c8] bg-linear-to-b from-[#566876] via-[#7c90a8] to-[#9fb3d0] px-[1px] text-[14.400px] text-white">
              <svg width="17" height="17" viewBox="0 0 17 17" className="shrink-0" fill="none" stroke="#000" strokeWidth="1.500"><path d="M1 6l7.500-5L16 6v10H1z M1 6l7.500 5L16 6 M1 16l5.500-6 M16 16l-5.500-6" /><path d="M4 8V4h9v4 M6 6h5" strokeWidth="1" /></svg>
              <span className="ml-[2px] grow">DTO_allgemein_ff</span>
              <svg width="10" height="9" viewBox="0 0 10 9" className="mr-[3px]"><path d="M1.500 0l7 8.500 M8.500 0l-7 8.500" stroke="#210a10" strokeWidth="2.400" /></svg>
            </div>
          </div>
          <div className="h-1 shrink-0 bg-[#bccde6]" />
          <div className="flex h-[814px] shrink-0">
            <div className="flex w-[1066px] shrink-0 flex-col">
              <PanelHead title="Suche Mieterakte wowi c/s" max />
              <SearchForm />
              <div className="h-1 shrink-0 bg-[#bccde6]" />
              <PanelHead title="Ergebnis" max />
              <Results />
            </div>
            <div className="w-1 shrink-0 bg-[#bccde6]" />
            <DocSide />
          </div>
        </div>
      </div>
      <Taskbar />
    </div>
  );
}
